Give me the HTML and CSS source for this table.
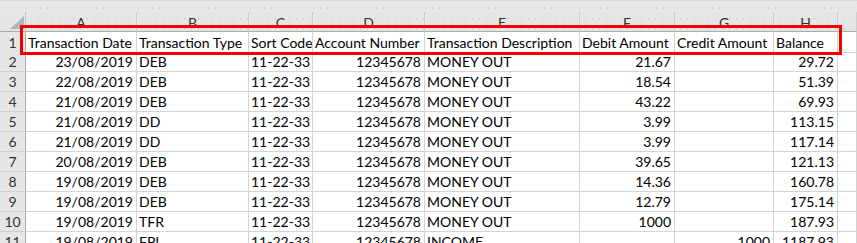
FILE: index.html
```html
<!DOCTYPE html>
<html>
<head>
<meta charset="utf-8">
<link rel="stylesheet" href="styles.css">
</head>
<body>
<div class="sheet">
  <div class="topband"></div>
  <div class="grid">
    <div class="corner"><span class="tri"></span></div>
    <div class="colhead">A</div><div class="colhead">B</div><div class="colhead">C</div><div class="colhead">D</div><div class="colhead">E</div><div class="colhead">F</div><div class="colhead">G</div><div class="colhead">H</div><div class="colhead last"></div>

    <div class="rowhead r1">1</div>
    <div class="c r1">Transaction Date</div><div class="c r1">Transaction Type</div><div class="c r1">Sort Code</div><div class="c r1">Account Number</div><div class="c r1">Transaction Description</div><div class="c r1">Debit Amount</div><div class="c r1">Credit Amount</div><div class="c r1">Balance</div><div class="c r1"></div>

    <div class="rowhead">2</div>
    <div class="c n">23/08/2019</div><div class="c">DEB</div><div class="c">11-22-33</div><div class="c n">12345678</div><div class="c">MONEY OUT</div><div class="c n">21.67</div><div class="c"></div><div class="c n">29.72</div><div class="c"></div>

    <div class="rowhead">3</div>
    <div class="c n">22/08/2019</div><div class="c">DEB</div><div class="c">11-22-33</div><div class="c n">12345678</div><div class="c">MONEY OUT</div><div class="c n">18.54</div><div class="c"></div><div class="c n">51.39</div><div class="c"></div>

    <div class="rowhead">4</div>
    <div class="c n">21/08/2019</div><div class="c">DEB</div><div class="c">11-22-33</div><div class="c n">12345678</div><div class="c">MONEY OUT</div><div class="c n">43.22</div><div class="c"></div><div class="c n">69.93</div><div class="c"></div>

    <div class="rowhead">5</div>
    <div class="c n">21/08/2019</div><div class="c">DD</div><div class="c">11-22-33</div><div class="c n">12345678</div><div class="c">MONEY OUT</div><div class="c n">3.99</div><div class="c"></div><div class="c n">113.15</div><div class="c"></div>

    <div class="rowhead">6</div>
    <div class="c n">21/08/2019</div><div class="c">DD</div><div class="c">11-22-33</div><div class="c n">12345678</div><div class="c">MONEY OUT</div><div class="c n">3.99</div><div class="c"></div><div class="c n">117.14</div><div class="c"></div>

    <div class="rowhead">7</div>
    <div class="c n">20/08/2019</div><div class="c">DEB</div><div class="c">11-22-33</div><div class="c n">12345678</div><div class="c">MONEY OUT</div><div class="c n">39.65</div><div class="c"></div><div class="c n">121.13</div><div class="c"></div>

    <div class="rowhead">8</div>
    <div class="c n">19/08/2019</div><div class="c">DEB</div><div class="c">11-22-33</div><div class="c n">12345678</div><div class="c">MONEY OUT</div><div class="c n">14.36</div><div class="c"></div><div class="c n">160.78</div><div class="c"></div>

    <div class="rowhead">9</div>
    <div class="c n">19/08/2019</div><div class="c">DEB</div><div class="c">11-22-33</div><div class="c n">12345678</div><div class="c">MONEY OUT</div><div class="c n">12.79</div><div class="c"></div><div class="c n">175.14</div><div class="c"></div>

    <div class="rowhead">10</div>
    <div class="c n">19/08/2019</div><div class="c">TFR</div><div class="c">11-22-33</div><div class="c n">12345678</div><div class="c">MONEY OUT</div><div class="c n">1000</div><div class="c"></div><div class="c n">187.93</div><div class="c"></div>

    <div class="rowhead">11</div>
    <div class="c n">19/08/2019</div><div class="c">FPI</div><div class="c">11-22-33</div><div class="c n">12345678</div><div class="c">INCOME</div><div class="c n"></div><div class="c n">1000</div><div class="c n">1187.93</div><div class="c"></div>
  </div>
  <div class="highlight"></div>
</div>
</body>
</html>
```

FILE: styles.css
```css
html, body {
  margin: 0;
  padding: 0;
  background: #ffffff;
}

.sheet {
  position: relative;
  width: 857px;
  height: 243px;
  overflow: hidden;
  font-family: Lato, "Liberation Sans", sans-serif;
  font-size: 14px;
  color: #000;
}

.topband {
  height: 12px;
  box-sizing: border-box;
  border-top: 1px solid #d6d6d6;
  background-color: #e8e8e8;
  background-image: radial-gradient(circle, #c9c9c9 0.7px, transparent 1.1px);
  background-size: 7px 10px;
  background-position: 2px 2px;
}

.grid {
  display: grid;
  grid-template-columns: 26px 111px 112px 64px 112px 155px 95px 99px 64px 1fr;
  grid-template-rows: 20px;
  grid-auto-rows: 20px;
}

.grid > div {
  box-sizing: border-box;
  border-right: 1px solid #d4d4d4;
  border-bottom: 1px solid #d4d4d4;
  white-space: nowrap;
  overflow: hidden;
}

.corner {
  position: relative;
  background: #e6e6e6;
  border-right-color: #c3c3c3 !important;
  border-bottom-color: #ababab !important;
}

.tri {
  position: absolute;
  right: 1px;
  bottom: 2px;
  width: 0;
  height: 0;
  border-left: 14px solid transparent;
  border-bottom: 13px solid #b5b5b5;
}

.colhead {
  background-color: #e6e6e6;
  background-image: radial-gradient(circle, #cfcfcf 0.7px, transparent 1.1px);
  background-size: 7px 10px;
  background-position: 2px 2px;
  border-right-color: #cfcfcf !important;
  border-bottom-color: #ababab !important;
  text-align: center;
  color: #333;
  line-height: 21px;
}

.rowhead {
  background: #e6e6e6;
  text-align: center;
  color: #333;
  line-height: 20px;
  border-right-color: #ababab !important;
  border-bottom-color: #cfcfcf !important;
}

.c {
  padding: 0 3px 0 2px;
  line-height: 20px;
}

.n {
  text-align: right;
}

.r1 {
  height: 21px;
  line-height: 21px;
}

.highlight {
  position: absolute;
  left: 20px;
  top: 25px;
  width: 822px;
  height: 30px;
  box-sizing: border-box;
  border: 3px solid #f00000;
}
```
